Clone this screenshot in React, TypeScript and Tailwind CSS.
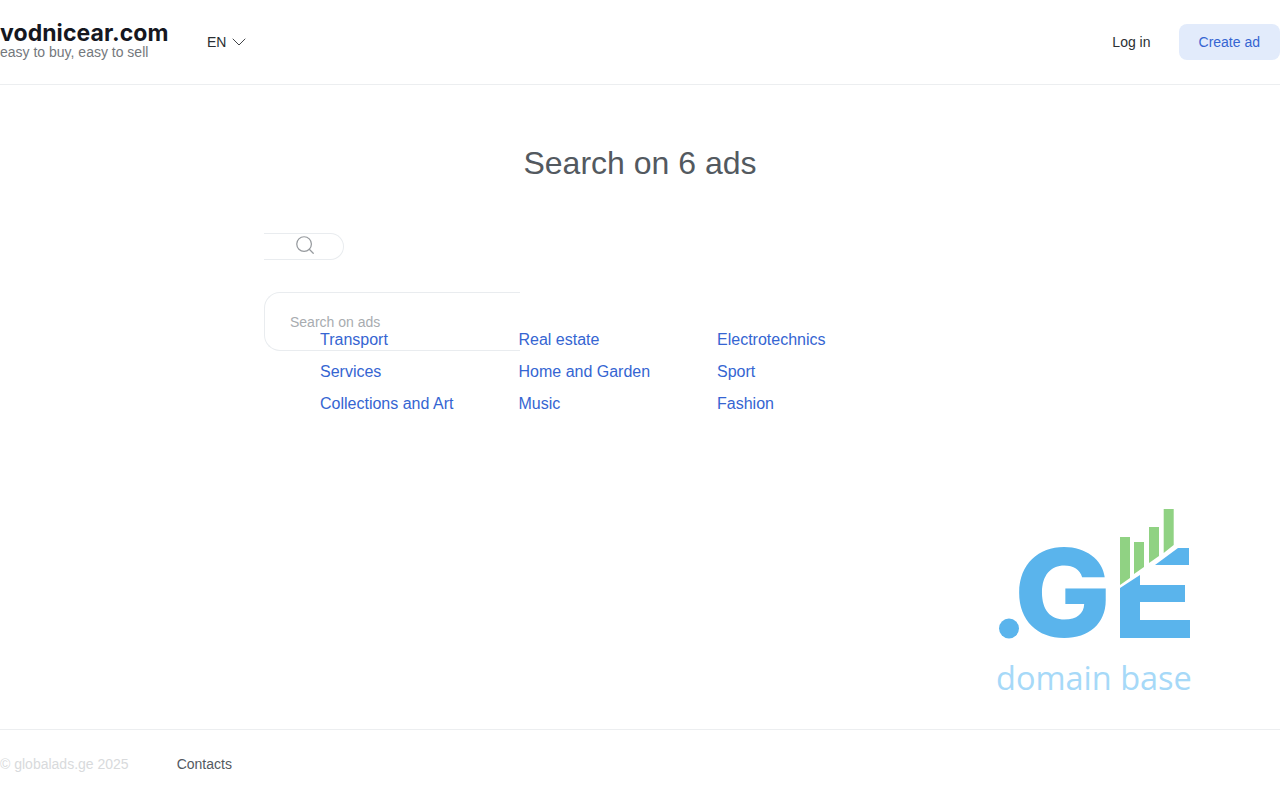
import { ChevronDown, Search } from "lucide-react";

const categories = [
  "Transport",
  "Real estate",
  "Electrotechnics",
  "Services",
  "Home and Garden",
  "Sport",
  "Collections and Art",
  "Music",
  "Fashion",
];

function DomainLogo() {
  return (
    <svg width="215" height="200" viewBox="0 0 215 200" aria-label=".GE domain base">
      <circle cx="24" cy="128.5" r="10" fill="#5ab4ec" />
      <text transform="translate(29 137) scale(1.06 1)" fill="#5ab4ec" fontFamily="Inter, sans-serif" fontSize="122" fontWeight="800">
        G
      </text>
      {/* E */}
      <polygon points="135,138 135,88 155,75 155,120 205,120 205,138" fill="#5ab4ec" />
      <polygon points="155,85 200,85 200,102 155,102" fill="#5ab4ec" />
      <polygon points="170,65 193,48 204,48 204,65" fill="#5ab4ec" />
      {/* bars */}
      <polygon points="135,37 145,37 145,78 135,85" fill="#90d283" />
      <polygon points="149,42 159,42 159,67 149,74" fill="#90d283" />
      <polygon points="164,27 174,27 174,56 164,63" fill="#90d283" />
      <polygon points="178.7,9 188.7,9 188.7,45 178.7,53" fill="#90d283" />
      <text x="11" y="190" fill="#a6d9f8" fontFamily="Open Sans, sans-serif" fontSize="32.5">
        domain base
      </text>
    </svg>
  );
}

export default function App() {
  return (
    <div className="flex min-h-[800px] flex-col bg-white font-['Liberation_Sans',sans-serif]">
      <header className="flex h-[85px] items-center border-b border-[#eceef0]">
        <div className="w-[207px] pb-[5px]">
          <div className="relative top-px font-['Inter',sans-serif] text-[23px] leading-[24px] font-bold tracking-[0.08px] text-[#15171f]">
            vodnicear.com
          </div>
          <div className="text-sm leading-[16px] text-[#74787d]">easy to buy, easy to sell</div>
        </div>
        <div className="flex items-center gap-px text-sm text-[#2b2f33]">
          EN
          <ChevronDown size={24} strokeWidth={0.9} />
        </div>
        <div className="ml-auto flex items-center">
          <a className="px-[28px] text-sm text-[#2b2f33]">Log in</a>
          <a className="flex h-9 items-center rounded-lg bg-[#e2ebfb] px-5 text-sm text-[#3565d2]">Create ad</a>
        </div>
      </header>

      <main className="mx-auto w-[752px] flex-1">
        <h1 className="mt-[59px] text-center text-[32px] leading-[38px] text-[#53595f]">Search on 6 ads</h1>

        <button className="mt-[51px] flex h-[27px] w-20 justify-center rounded-r-[14px] border border-l-0 border-[#e9ecef] pl-0.5 text-[#969a9e]">
          <Search size={22} strokeWidth={1.35} />
        </button>

        <div className="mt-8 h-[59px] w-64 rounded-l-2xl border border-r-0 border-[#e9ecef] pt-[19px] pl-[25px] text-sm text-[#a8acb0]">
          Search on ads
        </div>

        <div className="-mt-[23px] grid grid-cols-[198.5px_198.5px_198.5px] gap-y-2 pl-14">
          {categories.map((name) => (
            <a key={name} className="text-base leading-6 text-[#3565d2]">
              {name}
            </a>
          ))}
        </div>
      </main>

      <div className="-mt-[200px] mb-[29px] flex justify-end pr-20">
        <DomainLogo />
      </div>

      <footer className="flex h-[71px] items-center gap-12 border-t border-[#eceef0] pb-[3px] text-sm">
        <span className="text-[#d8dadc]">© globalads.ge 2025</span>
        <a className="text-[#53595f]">Contacts</a>
      </footer>
    </div>
  );
}
